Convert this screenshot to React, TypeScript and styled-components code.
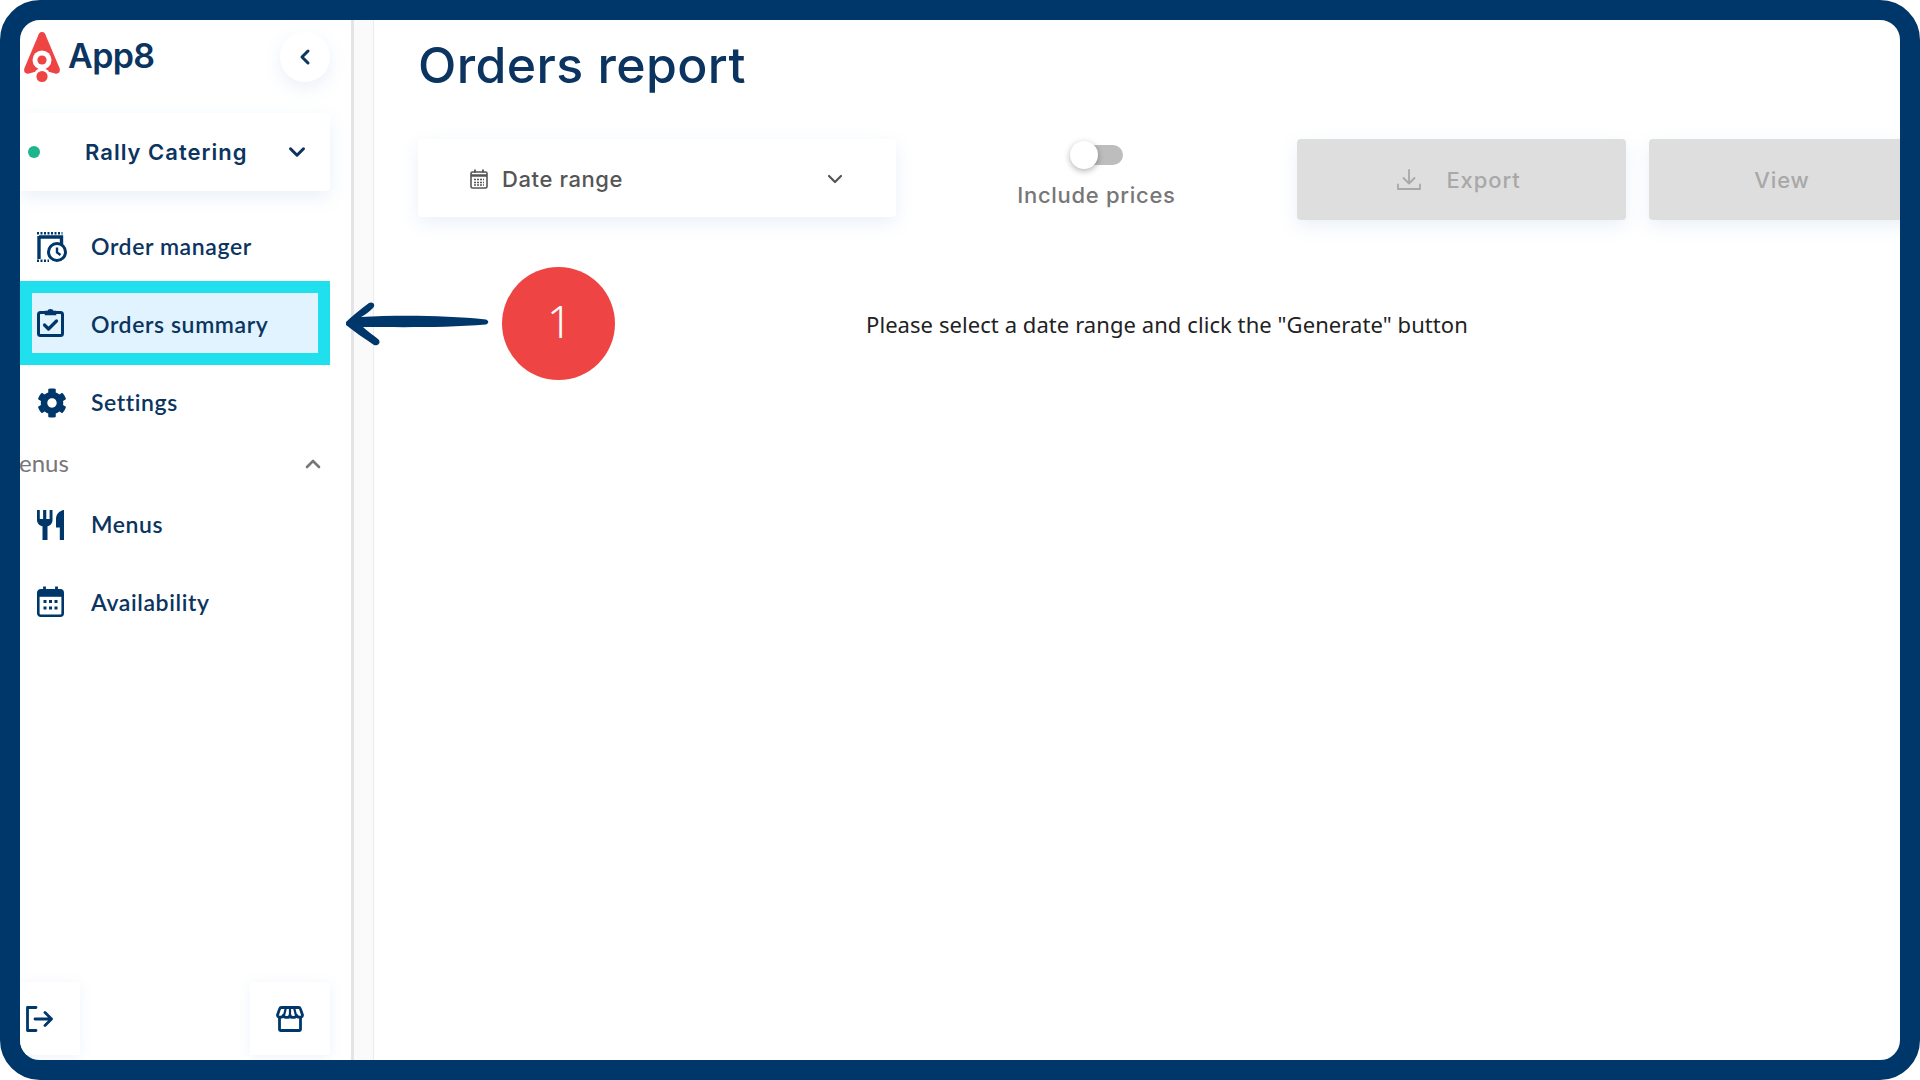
import React from "react";
import styled, { createGlobalStyle } from "styled-components";
import { ChevronDown, ChevronLeft, ChevronUp } from "lucide-react";
import { FaCog } from "react-icons/fa";

const navy = "#00376b";
const ink = "#0b3560";
const softShadow = "0 6px 18px rgba(90, 140, 200, 0.13)";

const Global = createGlobalStyle`
  html, body { margin: 0; padding: 0; background: #fff; }
  body { font-family: "Lato", "Noto Sans", sans-serif; }
  * { box-sizing: border-box; }
`;

const Frame = styled.div`
  position: relative;
  width: 1920px;
  height: 1080px;
  border: 20px solid ${navy};
  border-radius: 40px;
  background: #fff;
  display: flex;
  overflow: hidden;
`;

const Sidebar = styled.aside`
  flex: 0 0 334px;
  height: 100%;
  padding-right: 21px;
  border-right: 3px solid #e4e4e6;
  display: flex;
  flex-direction: column;
  overflow: hidden;
`;

const Gutter = styled.div`
  flex: 0 0 20px;
  background: #fafafa;
  border-right: 1px solid #ececee;
`;

const Header = styled.header`
  height: 74px;
  padding-left: 3px;
  display: flex;
  align-items: center;
  justify-content: space-between;
`;

const Brand = styled.div`
  display: flex;
  align-items: center;
  gap: 7px;
`;

const BrandName = styled.span`
  font-family: "Inter", sans-serif;
  font-size: 34px;
  font-weight: 600;
  letter-spacing: -0.6px;
  color: ${ink};
  padding-bottom: 4px;
`;

const CollapseButton = styled.button`
  width: 50px;
  height: 50px;
  padding: 0;
  border: 0;
  border-radius: 50%;
  background: #fff;
  color: ${ink};
  box-shadow: ${softShadow};
  display: flex;
  align-items: center;
  justify-content: center;
`;

const VenueCard = styled.div`
  height: 78px;
  margin-top: 19px;
  padding: 0 20px 0 8px;
  background: #fff;
  box-shadow: ${softShadow};
  border-radius: 0 4px 4px 0;
  display: flex;
  align-items: center;
  color: ${ink};
`;

const StatusDot = styled.span`
  width: 12px;
  height: 12px;
  border-radius: 50%;
  background: #1db48e;
`;

const VenueName = styled.span`
  margin-left: 45px;
  flex: 1;
  font-family: "Inter", sans-serif;
  font-size: 22px;
  font-weight: 600;
  letter-spacing: 1px;
`;

const Nav = styled.nav`
  margin-top: 26px;
  display: flex;
  flex-direction: column;
  gap: 18px;
`;

const NavRow = styled.div<{ $marked?: boolean }>`
  height: 60px;
  margin: ${(p) => (p.$marked ? "-2px 12px 2px" : "0 12px")};
  padding: ${(p) => (p.$marked ? "4px 0 0 5px" : "0 0 0 5px")};
  display: flex;
  align-items: center;
  gap: 27px;
  color: ${ink};
  background: ${(p) => (p.$marked ? "#e1f3fe" : "transparent")};
  outline: ${(p) => (p.$marked ? "12px solid #1fe0ec" : "none")};
`;

const IconSlot = styled.span<{ $lift?: number }>`
  flex: 0 0 27px;
  width: 27px;
  height: 32px;
  margin-bottom: ${(p) => p.$lift ?? 0}px;
  display: flex;
  align-items: center;
  justify-content: flex-start;
  color: ${navy};

  svg {
    flex-shrink: 0;
  }
`;

const NavLabel = styled.span`
  font-family: "Lato", sans-serif;
  font-size: 23px;
  font-weight: 600;
  letter-spacing: 0.6px;
  padding-bottom: 3px;
  white-space: nowrap;
`;

const GroupRow = styled.div`
  height: 24px;
  margin-top: 2px;
  padding-right: 5px;
  display: flex;
  align-items: center;
  justify-content: space-between;
  color: #777;
`;

const GroupLabel = styled.span`
  font-family: "Lato", sans-serif;
  font-size: 24px;
  line-height: 24px;
  margin: -5px 0 0 -1px;
`;

const GroupChevron = styled(ChevronUp)`
  margin-top: -2px;
`;

const SideFooter = styled.div`
  margin-top: auto;
  margin-bottom: 5px;
  display: flex;
  justify-content: space-between;
`;

const FooterCard = styled.div<{ $wide?: boolean }>`
  width: ${(p) => (p.$wide ? "80px" : "60px")};
  height: 73px;
  background: #fff;
  box-shadow: 0 2px 12px rgba(90, 140, 200, 0.1);
  display: flex;
  align-items: center;
  justify-content: ${(p) => (p.$wide ? "center" : "flex-start")};
  padding-left: ${(p) => (p.$wide ? "0" : "5px")};
  color: ${navy};
`;

const Main = styled.main`
  flex: 1;
  min-width: 0;
  height: 100%;
  padding-left: 44px;
  overflow: hidden;
`;

const Title = styled.h1`
  margin: 0;
  height: 119px;
  padding-top: 15px;
  font-family: "Inter", sans-serif;
  font-size: 50px;
  line-height: 60px;
  font-weight: 500;
  letter-spacing: 0.4px;
  color: ${ink};
`;

const Toolbar = styled.div`
  display: flex;
  align-items: flex-start;
  width: 1600px;
`;

const DateCard = styled.div`
  flex: 0 0 478px;
  height: 78px;
  padding: 2px 49px 0 52px;
  background: #fff;
  border-radius: 4px;
  box-shadow: ${softShadow};
  display: flex;
  align-items: center;
  gap: 14px;
  color: #555;
`;

const DateLabel = styled.span`
  flex: 1;
  font-family: "Inter", sans-serif;
  font-size: 22px;
  font-weight: 500;
  letter-spacing: 0.6px;
`;

const ToggleBlock = styled.div`
  flex: 0 0 401px;
  display: flex;
  flex-direction: column;
  align-items: center;
  padding-top: 2px;
`;

const ToggleTrack = styled.div`
  position: relative;
  width: 39px;
  height: 20px;
  margin: 4px 0 0 14px;
  border-radius: 10px;
  background: #bdbdbd;
`;

const ToggleThumb = styled.span`
  position: absolute;
  left: -14px;
  top: -4px;
  width: 28px;
  height: 28px;
  border-radius: 50%;
  background: #fff;
  box-shadow: 0 2px 6px rgba(0, 0, 0, 0.3);
`;

const ToggleLabel = styled.span`
  margin-top: 17px;
  font-family: "Inter", sans-serif;
  font-size: 22px;
  font-weight: 500;
  letter-spacing: 0.7px;
  color: #777;
`;

const DisabledButton = styled.div<{ $w: number; $nudge?: number }>`
  flex: 0 0 ${(p) => p.$w}px;
  height: 81px;
  margin-right: 23px;
  padding: 1px ${(p) => p.$nudge ?? 0}px 0 0;
  border-radius: 4px;
  background: #dedede;
  color: #a8a8a8;
  box-shadow: ${softShadow};
  display: flex;
  align-items: center;
  justify-content: center;
  gap: 25px;
  font-family: "Inter", sans-serif;
  font-size: 22px;
  font-weight: 500;
  letter-spacing: 0.9px;
`;

const Message = styled.p`
  margin: 90px 0 0 448px;
  font-family: "Noto Sans", sans-serif;
  font-size: 22px;
  line-height: 29px;
  letter-spacing: 0.07px;
  color: #222;
  white-space: nowrap;
`;

const CallArrow = styled.svg`
  position: absolute;
  left: 325px;
  top: 280px;
`;

const StepBadge = styled.div`
  position: absolute;
  left: 482px;
  top: 247px;
  width: 113px;
  height: 113px;
  padding: 0 0 6px 2px;
  border-radius: 50%;
  background: #ef4444;
  color: #fff;
  font-family: "Noto Sans", sans-serif;
  font-size: 44px;
  font-weight: 300;
  display: flex;
  align-items: center;
  justify-content: center;
`;

const Logo = () => (
  <svg width="38" height="52" viewBox="0 0 38 52">
    <path
      d="M19 1 C16.5 1 15.5 3 15 5 L1.5 37 C0 41 3 43.5 6 42.5 L15 40 L23 40 L32 42.5 C35 43.500 38 41 36.5 37 L23 5 C22.5 3 21.5 1 19 1 Z"
      fill="#ef4444"
    />
    <circle cx="19" cy="29" r="9.5" fill="#fff" />
    <circle cx="19" cy="29" r="4.6" fill="#ef4444" />
    <circle cx="19" cy="45" r="8" fill="#fff" />
    <circle cx="19" cy="45.5" r="5.6" fill="#ef4444" />
  </svg>
);

const ReceiptClock = () => (
  <svg width="30" height="30" viewBox="0 0 30 30" fill="none" stroke="currentColor">
    <path d="M2 4v23M2 5h22.500v8" strokeWidth="3.400" />
    <path d="M0 1.200h25.500" strokeWidth="2.400" strokeDasharray="2 1.500" />
    <path d="M0 28.800h12" strokeWidth="2.400" strokeDasharray="2 1.500" />
    <circle cx="20" cy="20" r="8.500" fill="#fff" strokeWidth="3" />
    <path d="M20 15.500v5l3.500 2.500" strokeWidth="2.400" />
  </svg>
);

const ClipboardCheck = () => (
  <svg width="27" height="30" viewBox="0 0 27 30" fill="none" stroke="currentColor" strokeWidth="3">
    <path d="M8 5.500H3.500a2 2 0 0 0-2 2v19a2 2 0 0 0 2 2h20a2 2 0 0 0 2-2v-19a2 2 0 0 0-2-2H19" />
    <path d="M8.500 7.500V4.500h2.300a2.900 2.900 0 0 1 5.400 0h2.300v3z" fill="currentColor" strokeWidth="1.500" />
    <path d="M7.500 18l4 4 8-8" strokeWidth="3.200" strokeLinecap="round" strokeLinejoin="round" />
  </svg>
);

const Cutlery = () => (
  <svg width="27" height="30" viewBox="0 0 27 30" fill="currentColor">
    <path d="M0 0h2.800v9h3.300V0h3.200v9h3.300V0h2.900v10c0 3.500-2.300 5.600-5 6.200V30H5.500V16.200C2.600 15.600 0 13.500 0 10z" />
    <path d="M27 0v30h-4.200V17.500H19V9c0-5 3.800-8.500 8-9z" />
  </svg>
);

const CalendarFull = () => (
  <svg width="27" height="31" viewBox="0 0 27 31" fill="none">
    <rect x="1.300" y="4.300" width="24.400" height="25.400" rx="2.500" stroke="currentColor" strokeWidth="2.600" />
    <rect x="1.300" y="4.300" width="24.400" height="6.500" fill="currentColor" />
    <path d="M7.500 0.500v5M19.500 0.500v5" stroke="currentColor" strokeWidth="2.800" />
    <g fill="currentColor">
      <rect x="6.500" y="14" width="3" height="3" />
      <rect x="12" y="14" width="3" height="3" />
      <rect x="17.500" y="14" width="3" height="3" />
      <rect x="6.500" y="20.500" width="3" height="3" />
      <rect x="12" y="20.500" width="3" height="3" />
      <rect x="17.500" y="20.500" width="3" height="3" />
    </g>
  </svg>
);

const CalendarSmall = () => (
  <svg width="18" height="20" viewBox="0 0 18 20" fill="none" stroke="currentColor">
    <rect x="1" y="3" width="16" height="16" rx="1.500" strokeWidth="1.600" />
    <path d="M1 6.500h16" strokeWidth="2.400" />
    <path d="M5 0.500v3M13 0.500v3" strokeWidth="1.800" />
    <path d="M4 10.500h10M4 13.500h10M4 16h10" strokeWidth="1.400" strokeDasharray="2 1" />
  </svg>
);

const Logout = () => (
  <svg width="28" height="26" viewBox="0 0 28 26" fill="none" stroke="currentColor" strokeWidth="2.800" strokeLinecap="round" strokeLinejoin="round">
    <path d="M11 1.500H2.500v23H11" />
    <path d="M10 13h16.500M20 6.500l6.500 6.500-6.500 6.500" />
  </svg>
);

const Store = () => (
  <svg width="28" height="26" viewBox="0 0 28 26" fill="none" stroke="currentColor" strokeWidth="2.800" strokeLinecap="round" strokeLinejoin="round">
    <path d="M5.500 1.500h17a2 2 0 0 1 1.900 1.400l2.100 6.100c.4 2.600-5.200 3.200-6 .2-.7 3-6.300 3-6.500 0-.2 3-5.800 3-6.500 0-.8 3-6.400 2.400-6-.2l2.100-6.100a2 2 0 0 1 1.900-1.400z" />
    <path d="M10 1.500L8 9.500M14 1.500v8M18 1.500l2 8" strokeWidth="2.200" />
    <path d="M3.500 12v11.500a1 1 0 0 0 1 1h19a1 1 0 0 0 1-1V12" />
  </svg>
);

const Download = () => (
  <svg width="24" height="24" viewBox="0 0 24 24" fill="none" stroke="currentColor" strokeWidth="1.800" strokeLinecap="round" strokeLinejoin="round">
    <path d="M12 2v13M6.500 10l5.500 5.500L17.500 10" />
    <path d="M1 16.500v4.500h22v-4.500" />
  </svg>
);

export default function App() {
  return (
    <>
      <Global />
      <Frame>
        <Sidebar>
          <Header>
            <Brand>
              <Logo />
              <BrandName>App8</BrandName>
            </Brand>
            <CollapseButton>
              <ChevronLeft size={24} strokeWidth={3} />
            </CollapseButton>
          </Header>
          <VenueCard>
            <StatusDot />
            <VenueName>Rally Catering</VenueName>
            <ChevronDown size={26} strokeWidth={2.8} />
          </VenueCard>
          <Nav>
            <NavRow>
              <IconSlot><ReceiptClock /></IconSlot>
              <NavLabel>Order manager</NavLabel>
            </NavRow>
            <NavRow $marked>
              <IconSlot $lift={6}><ClipboardCheck /></IconSlot>
              <NavLabel>Orders summary</NavLabel>
            </NavRow>
            <NavRow>
              <IconSlot><FaCog size={30} /></IconSlot>
              <NavLabel>Settings</NavLabel>
            </NavRow>
            <GroupRow>
              <GroupLabel>enus</GroupLabel>
              <GroupChevron size={24} strokeWidth={2.6} />
            </GroupRow>
            <NavRow>
              <IconSlot><Cutlery /></IconSlot>
              <NavLabel>Menus</NavLabel>
            </NavRow>
            <NavRow>
              <IconSlot $lift={3}><CalendarFull /></IconSlot>
              <NavLabel>Availability</NavLabel>
            </NavRow>
          </Nav>
          <SideFooter>
            <FooterCard><Logout /></FooterCard>
            <FooterCard $wide><Store /></FooterCard>
          </SideFooter>
        </Sidebar>
        <Gutter />
        <Main>
          <Title>Orders report</Title>
          <Toolbar>
            <DateCard>
              <CalendarSmall />
              <DateLabel>Date range</DateLabel>
              <ChevronDown size={24} strokeWidth={2.2} />
            </DateCard>
            <ToggleBlock>
              <ToggleTrack><ToggleThumb /></ToggleTrack>
              <ToggleLabel>Include prices</ToggleLabel>
            </ToggleBlock>
            <DisabledButton $w={329} $nudge={5}>
              <Download />
              <span>Export</span>
            </DisabledButton>
            <DisabledButton $w={266}>
              <span>View</span>
            </DisabledButton>
          </Toolbar>
          <Message>Please select a date range and click the "Generate" button</Message>
        </Main>
        <CallArrow width="145" height="50" viewBox="0 0 145 50">
          <path
            d="M1 22 C8 15 16 9 24 3 C28 1 31 5 28 8 C24 12 20 15 16 17 C50 15 100 15 141 19.500 C144 21 144 23 141 24.500 C100 28 50 27 18 27 C23 32 30 36 34 40 C36 44 32 46 29 45 C20 39 10 32 1 25 Z"
            fill={navy}
          />
        </CallArrow>
        <StepBadge>1</StepBadge>
      </Frame>
    </>
  );
}
